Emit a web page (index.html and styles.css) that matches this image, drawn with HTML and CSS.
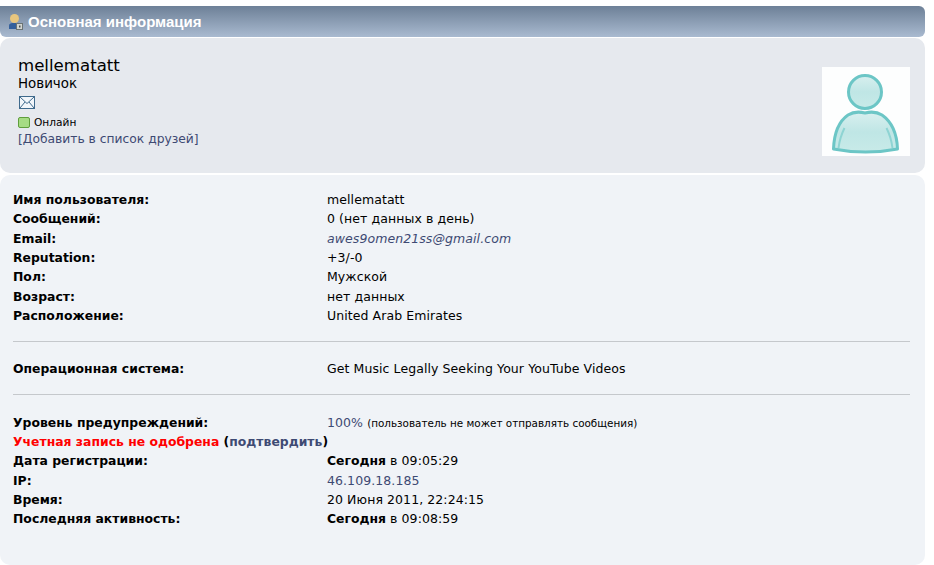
FILE: index.html
```html
<!DOCTYPE html>
<html lang="ru">
<head>
<meta charset="utf-8">
<title>Основная информация</title>
<link rel="stylesheet" href="styles.css">
</head>
<body>
<div class="page">
  <h1 class="titlebar">
    <svg class="title-icon" width="16" height="16" viewBox="0 0 16 16">
      <ellipse cx="6.500" cy="4.500" rx="4.500" ry="4.500" fill="#e8c67e"/>
      <path d="M1 15V11.500C1 9.500 3 9 6.500 9S11 9.500 11 11.500V15Z" fill="#34609c"/>
      <rect x="8.500" y="9.500" width="6" height="6" fill="#d2d5d0" stroke="#6b7474"/>
      <rect x="11" y="11.500" width="1.500" height="2" fill="#4a5252"/>
    </svg>
    Основная информация
  </h1>
  <section class="card card-top">
    <div class="who">
      <div class="name">mellematatt</div>
      <div class="rank">Новичок</div>
      <svg class="mail" width="16" height="13" viewBox="0 0 16 13">
        <rect x="0.500" y="0.500" width="15" height="12" fill="#f2f6fa" stroke="#3f6a8c"/>
        <path d="M1 1L8 7.500L15 1M1 12L6 6M15 12L10 6" fill="none" stroke="#3f6a8c"/>
      </svg>
      <div class="status"><span class="dot"></span>Онлайн</div>
      <a class="friend" href="#">[Добавить в список друзей]</a>
    </div>
    <div class="avatar">
      <svg width="88" height="89" viewBox="0 0 88 89">
        <defs>
          <linearGradient id="fill" x1="0" y1="0" x2="0" y2="1">
            <stop offset="0" stop-color="#d8efef"/>
            <stop offset="0.500" stop-color="#bfe6e5"/>
            <stop offset="1" stop-color="#c8eae8"/>
          </linearGradient>
        </defs>
        <circle cx="43" cy="25" r="16.500" fill="url(#fill)" stroke="#6cc6c6" stroke-width="3"/>
        <path d="M11.500 82C12 68 16 55 26 48C30 45.500 37 44.500 43 46C49 44.500 56 45.500 60 48C70 55 75 68 75.500 82C55 86 32 86 11.500 82Z" fill="url(#fill)" stroke="#6cc6c6" stroke-width="3" stroke-linejoin="round"/>
        <path d="M16.500 81C17.500 73 19.500 67 22.500 61M70.500 81C69.500 73 67.500 67 64.500 61" fill="none" stroke="#8ed4d3" stroke-width="2"/>
      </svg>
    </div>
  </section>
  <section class="card card-info">
    <dl class="rows">
      <dt>Имя пользователя:</dt><dd>mellematatt</dd>
      <dt>Сообщений:</dt><dd>0 (нет данных в день)</dd>
      <dt>Email:</dt><dd><a class="mailto" href="#">awes9omen21ss@gmail.com</a></dd>
      <dt>Reputation:</dt><dd>+3/-0</dd>
      <dt>Пол:</dt><dd>Мужской</dd>
      <dt>Возраст:</dt><dd>нет данных</dd>
      <dt>Расположение:</dt><dd>United Arab Emirates</dd>
    </dl>
    <hr class="rule">
    <dl class="rows">
      <dt>Операционная система:</dt><dd>Get Music Legally Seeking Your YouTube Videos</dd>
    </dl>
    <hr class="rule rule-second">
    <dl class="rows">
      <dt>Уровень предупреждений:</dt><dd><a class="link" href="#">100%</a> <small class="note">(пользователь не может отправлять сообщения)</small></dd>
      <div class="full"><span class="alert">Учетная запись не одобрена</span> (<a class="link" href="#">подтвердить</a>)</div>
      <dt>Дата регистрации:</dt><dd><b>Сегодня</b> в 09:05:29</dd>
      <dt>IP:</dt><dd><a class="link" href="#">46.109.18.185</a></dd>
      <dt>Время:</dt><dd>20 Июня 2011, 22:24:15</dd>
      <dt>Последняя активность:</dt><dd><b>Сегодня</b> в 09:08:59</dd>
    </dl>
  </section>
</div>
</body>
</html>
```
FILE: styles.css
```css
* { box-sizing: border-box; }
html, body { margin: 0; padding: 0; background: #fff; }
body {
  height: 565px;
  overflow: hidden;
  font-family: "DejaVu Sans", Verdana, sans-serif;
  font-size: 12.500px;
  letter-spacing: 0.080px;
  color: #000;
}
a { text-decoration: none; }
.page {
  width: 925px;
  padding-top: 6px;
  display: flex;
  flex-direction: column;
  height: 565px;
}
.titlebar {
  margin: 0;
  height: 31px;
  padding: 0 0 0 8px;
  display: flex;
  align-items: center;
  gap: 4px;
  font: bold 15px "Liberation Sans", Arial, sans-serif;
  letter-spacing: 0;
  color: #fff;
  background: linear-gradient(#6d8097, #a9bad0);
  border-radius: 0 6px 6px 6px;
}
.title-icon { flex: none; }
.card { border-radius: 10px; }
.card-top {
  margin-top: 1px;
  height: 135px;
  padding: 18px 15px 0 18px;
  background: #e6e9ee;
  display: flex;
  justify-content: space-between;
  align-items: flex-start;
}
.who { display: flex; flex-direction: column; align-items: flex-start; }
.name { font-size: 16.600px; letter-spacing: 0; line-height: 20px; }
.rank { font-size: 13.400px; letter-spacing: 0; line-height: 16px; }
.mail { margin: 4px 0 0 1px; }
.status {
  display: flex;
  align-items: center;
  gap: 4px;
  font-size: 10.600px;
  letter-spacing: 0;
  line-height: 14px;
  margin-top: 6px;
}
.dot {
  width: 12px;
  height: 11px;
  background: #a6dc84;
  border: 1px solid #5f9e3c;
  border-radius: 2px;
}
.friend { font-size: 12.300px; letter-spacing: 0; line-height: 20px; color: #3e4a73; }
.avatar { margin-top: 11px; width: 88px; height: 89px; background: #fdfefe; }
.avatar svg { display: block; }
.card-info {
  margin-top: 2px;
  flex: 1;
  padding: 15px 15px 0 13px;
  background: #f0f3f7;
}
.rows {
  margin: 0;
  display: grid;
  grid-template-columns: 314px 1fr;
  grid-auto-rows: 19.330px;
  line-height: 19.330px;
}
dt { font-size: 12.400px; font-weight: bold; letter-spacing: 0; }
dd { margin: 0; }
.full { grid-column: 1 / -1; font-size: 12.400px; font-weight: bold; letter-spacing: 0; }
dd b { font-size: 12.400px; letter-spacing: 0; }
.alert { color: #f00; }
.link { color: #3e4a73; }
.mailto { color: #3e4a73; font-style: italic; }
.note { font-size: 10.400px; letter-spacing: 0; }
.rule {
  margin: 16px 0 17px;
  border: 0;
  border-top: 1px solid #c5c8cc;
  height: 0;
}
.rule-second { margin: 15px 0 18px; }
```
